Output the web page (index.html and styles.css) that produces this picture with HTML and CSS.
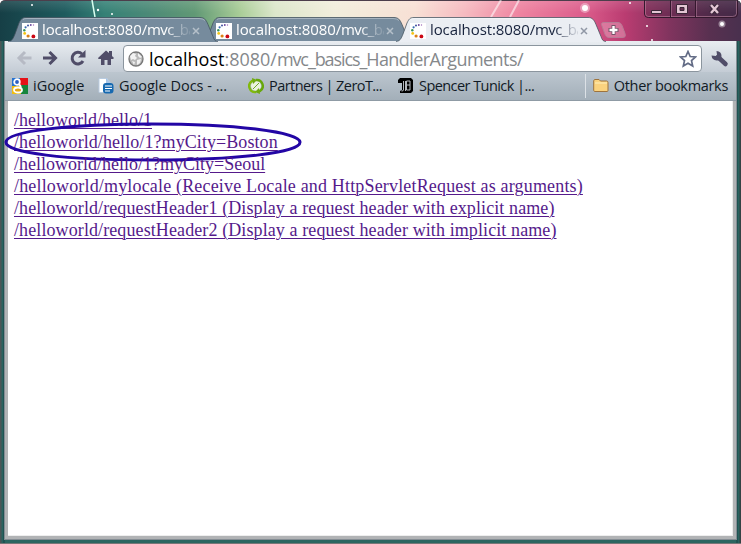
FILE: index.html
```html
<!DOCTYPE html>
<html lang="en">
<head>
<meta charset="utf-8">
<title>localhost:8080/mvc_basics_HandlerArguments/</title>
<link rel="stylesheet" href="styles.css">
</head>
<body>
<svg class="defs" width="0" height="0">
  <defs>
    <symbol id="fav" viewBox="0 0 16 16"><path fill="#fff" d="M0 0h16v16H0z"/><circle cx="11.5" cy="2" r=".7" fill="#a06dbb"/><circle cx="8.8" cy="2" r=".9" fill="#65429a"/><circle cx="6" cy="2.5" r="1" fill="#4050a0"/><circle cx="3.6" cy="4.3" r="1.1" fill="#386cae"/><circle cx="2.3" cy="7.2" r="1.2" fill="#39945c"/><circle cx="2.7" cy="10.4" r="1.4" fill="#f5c514"/><circle cx="6.1" cy="13" r="1.6" fill="#dc8116"/><circle cx="11.4" cy="13.4" r="1.9" fill="#cc0714"/></symbol>
    <symbol id="close" viewBox="0 0 8 8"><path d="m1 1 6 6m0-6L1 7" fill="none" stroke="currentColor" stroke-width="1.5"/></symbol>
    <symbol id="tabshape" viewBox="0 0 210 25"><path d="M0 25C4 24 5 22 7 17l4-11C13 2 14 .5 18 .5h174c4 0 6 2 8 7l5 12c1 3 2 5 5 5.500z" fill="currentColor"/><path d="M0 24.500C4 24 5 22 7 17l4-11C13 2 14 .5 18 .5h174c4 0 6 2 8 7l5 12c1 3 2 5 5 5" fill="none" stroke="#40505c" stroke-opacity=".75"/><path d="M15 2.500q1-1 4-1h172q4 0 6 2" fill="none" stroke="#fff" stroke-opacity=".35"/></symbol>
  </defs>
</svg>
<div class="window">
  <header class="titlebar">
    <svg class="sparkles" width="741" height="41" aria-hidden="true">
      <path d="m92 0 3 17" stroke="#d9fff0" stroke-width="1.5"/><path d="m501 0-10 17m28-17-9 17" stroke="#fff" stroke-width="2" opacity=".55"/>
      <g fill="#fff"><circle cx="32" cy="5" r="1"/><circle cx="98" cy="10" r="1.2"/><circle cx="112" cy="14" r="1"/><circle cx="585" cy="8" r="5" opacity=".35"/><circle cx="585" cy="8" r="3"/><circle cx="630" cy="3" r="1"/><circle cx="647" cy="26" r="1"/><circle cx="722" cy="24" r="3.5" opacity=".4"/><circle cx="722" cy="24" r="2"/><circle cx="652" cy="40" r="1"/></g>
    </svg>
    <nav class="tabs">
      <div class="tab first"><svg class="shape"><use href="#tabshape"/></svg><svg class="fav"><use href="#fav"/></svg><span class="label">localhost:8080/<i>mvc_ba</i></span><svg class="close"><use href="#close"/></svg></div>
      <div class="tab"><svg class="shape"><use href="#tabshape"/></svg><svg class="fav"><use href="#fav"/></svg><span class="label">localhost:8080/<i>mvc_ba</i></span><svg class="close"><use href="#close"/></svg></div>
      <div class="tab active"><svg class="shape"><use href="#tabshape"/></svg><svg class="fav"><use href="#fav"/></svg><span class="label">localhost:8080/<i>mvc_ba</i></span><svg class="close"><use href="#close"/></svg></div>
      <svg class="newtab" width="27" height="16" viewBox="0 0 27 16"><path d="M4 .5h14c2 0 3 1 4 3l3 8c1 3 0 4-3 4H9c-2 0-3-1-4-3L2 4C1 2 1 .5 4 .5z" fill="#e9a4bd" fill-opacity=".5" stroke="#b87c96"/><path d="M13.500 3v10M8.500 8h10" stroke="#765469" stroke-width="4"/><path d="M13.500 4v8M9.500 8h8" stroke="#fff" stroke-width="2.400"/></svg>
    </nav>
    <svg class="controls" width="94" height="19" viewBox="0 0 94 19"><path d="M.5 0v14q0 3.500 4 3.500h85q4 0 4-3.500V0" fill="#321832" fill-opacity=".25" stroke="#35182e"/><path d="M1.500 1v13q0 2.500 3 2.500h84q4 0 4-3V1" fill="none" stroke="#c990aa" stroke-opacity=".5"/><path d="M26.500 0v17M51.500 0v17" stroke="#35182e"/><path d="M27.500 1v16M52.500 1v16" stroke="#b882a0" stroke-opacity=".5"/><g stroke="#3b2637" fill="#e3c6d4"><path d="M7.500 10.500h10v3h-10z"/><path fill-rule="evenodd" d="M32.500 4.500h11v9h-11zm3.500 3v3h4v-3z"/></g><path d="m67 5 7 8m0-8-7 8" stroke="#382638" stroke-width="4.500"/><path d="m67 5 7 8m0-8-7 8" stroke="#e3c6d4" stroke-width="2.400"/></svg>
  </header>
  <div class="chrome">
    <div class="toolbar">
      <svg class="nav" width="110" height="26" viewBox="11 0 110 26">
        <path d="M34.500 13H22m6-6-6 6 6 6" fill="none" stroke="#b6bac4" stroke-width="3"/>
        <path d="M46 13h12.500m-6-6 6 6-6 6" fill="none" stroke="#504d68" stroke-width="3"/>
        <path d="M85 9a5.800 5.800 0 1 0 1 7" fill="none" stroke="#504d68" stroke-width="3"/><path d="M88.500 5v7.500H81z" fill="#504d68"/>
        <path d="m101 13 8-7.500 3 2.500V6h3v5l2 2-1 1h-2v6h-3.500v-5h-3v5H104v-6h-2.500z" fill="#504d68"/>
      </svg>
      <div class="omnibox">
        <svg width="16" height="16" viewBox="0 0 16 16"><circle cx="8" cy="8" r="7" fill="#b9b9b9" stroke="#777" stroke-width="1.300"/><path d="m2 5 3-3 3 1-1 2 2 2-2 2-2-1-2 1zM10 2l4 4-2 1-2-2zM9 9l4-1-1 4-3 2zM4 10l3 1-1 3z" fill="#f2f2f2"/></svg>
        <span class="url"><b>localhost</b>:8080/<span class="path">mvc_basics_</span><span class="file">HandlerArguments/</span></span>
        <svg class="star" width="18" height="18" viewBox="0 0 18 18"><path d="m9 1.500 2.200 5 5.300.5-4 3.600 1.200 5.400L9 13.200 4.300 16l1.200-5.400-4-3.600 5.300-.5z" fill="#fff" stroke="#626b85" stroke-width="1.700"/></svg>
      </div>
      <svg class="wrench" width="18" height="18" viewBox="0 0 18 18"><path d="m7 7 7.500 7" stroke="#504d68" stroke-width="4.500" stroke-linecap="round"/><path d="M.5 5.500 5 6l1-1-.5-4Q10.500 1.500 10.500 6q-.5 5-5 4.500T.5 5.500z" fill="#504d68"/></svg>
    </div>
    <div class="bookmarks">
      <span class="bm ig"><svg width="16" height="16" viewBox="0 0 16 16"><rect width="16" height="16" fill="#fff"/><path d="M8 0h8v7H8z" fill="#e51218"/><path d="M9 7h7v9H8z" fill="#16853c"/><path d="M0 8h9v8H0z" fill="#f1be10"/><path d="M0 0h8v8H0z" fill="#2873d0"/><circle cx="5" cy="4" r="2.800" fill="#295fc4" stroke="#fff" stroke-width="1.800"/><ellipse cx="6" cy="12" rx="4" ry="2.500" fill="#e3a61a" stroke="#fff" stroke-width="1.800"/><path d="m7 6 2 3" stroke="#fff" stroke-width="2"/></svg><span>iGoogle</span></span>
      <span class="bm docs"><svg width="16" height="16" viewBox="0 0 16 16"><path d="M1 .5h8l3 4v10H1z" fill="#fff" stroke="#b8cbe0"/><path d="M8 0v5h5z" fill="#a8c4e4"/><rect x="5" y="5" width="10.500" height="10.500" rx="3" fill="#1769b0"/><path d="M7 8h7M7 10.500h7M7 13h5" stroke="#fff"/></svg><span>Google Docs - ...</span></span>
      <span class="bm partners"><svg width="16" height="16" viewBox="0 0 16 16"><circle cx="8" cy="8" r="5" fill="#eaf3dd"/><path d="M8 14A6 6 0 0 1 4 3l2-1" fill="none" stroke="#81b90d" stroke-width="2.400"/><path d="M8 2a6 6 0 0 1 4 11l-2 1" fill="none" stroke="#67a80b" stroke-width="2.400"/><path d="m4 0 5 2-4 4zM12 16l-5-2 4-4z" fill="#70aa11"/><path d="m5 11 6-6" stroke="#72a82a"/></svg><span>Partners | ZeroT...</span></span>
      <span class="bm spencer"><svg width="16" height="16" viewBox="0 0 16 16"><path d="M2 0h11l2 2v11l-2 2H2v-2l2-1V5H0V2z" fill="#000"/><path d="M5.500 3v9q0 1-2 1M8.500 3H12v9H8.500zM9 7h3M7.500 3v10" fill="none" stroke="#c7cdd3" stroke-width=".9"/></svg><span>Spencer Tunick |...</span></span>
      <span class="bm other"><svg width="16" height="16" viewBox="0 0 16 16"><path d="M.7 12.500V2.700Q1 1.500 2 1.500h4L7.500 3h6q1.500 0 1.500 1.500v8q0 1-1 1H2q-1 0-1.300-1z" fill="#fbd37f" stroke="#9d733e"/><path d="M2 5h12" stroke="#fff0bd"/></svg><span>Other bookmarks</span></span>
    </div>
    <main class="page">
      <a>/helloworld/hello/1</a>
      <a class="circled">/helloworld/hello/1?myCity=Boston<svg class="ring" width="302" height="44" viewBox="0 0 302 44"><path d="M4 21C5 10 68 3 149 3c86 0 148 8 149 18 1 11-65 18-149 18C64 39 3 32 4 21z" fill="none" stroke="#2306a5" stroke-width="3"/></svg></a>
      <a>/helloworld/hello/1?myCity=Seoul</a>
      <a class="locale">/helloworld/mylocale (Receive Locale and HttpServletRequest as arguments)</a>
      <a class="header">/helloworld/requestHeader1 (Display a request header with explicit name)</a>
      <a class="header">/helloworld/requestHeader2 (Display a request header with implicit name)</a>
    </main>
  </div>
</div>
</body>
</html>
```
FILE: styles.css
```css
* { box-sizing: border-box; }
body { margin: 0; overflow: hidden; font-family: "Open Sans", "Noto Sans", sans-serif; }
svg { display: block; flex: none; }
.defs { position: absolute; }
.window { width: 741px; height: 544px; display: flex; flex-direction: column; background: linear-gradient(90deg, #4b5556 0 1px, #29625f 2px 3px, #174344 4px, transparent 5px 736px, #174344 737px, #29625f 738px 739px, #344244 740px), linear-gradient(#225255, #2c6661); border-top: 1px solid #4c3e4b; border-bottom: 1px solid #777; border-radius: 5px 5px 0 0; }
.titlebar { position: relative; height: 40px; flex: none; display: flex; align-items: flex-start; background: linear-gradient(180deg, rgba(255,255,255,.12), transparent 30%), linear-gradient(90deg, #163f46 0, #1e5b5e 65px, #358176 105px, #4c8a77 150px, #619975 195px, #a9cd97 240px, #dce7cb 275px, #f2eedc 335px, #f8e0d5 415px, #f6bac0 465px, #ee83a0 520px, #dc5c8b 585px, #ba3c71 625px, #80345e 670px, #583050 710px, #49304e 741px); border-radius: 5px 5px 0 0; }
.sparkles { position: absolute; left: 0; top: -1px; }
.tabs { display: flex; margin: 16px 0 0 8px; height: 24px; }
.tab { position: relative; display: flex; align-items: center; width: 209px; height: 24px; padding: 0 12px 0 14px; margin-left: -15px; color: #fff; flex: none; }
.tab.first { margin-left: 0; z-index: 1; }
.tab.active { z-index: 2; color: #17223c; }
.shape { position: absolute; left: 0; top: 0; width: 210px; height: 25px; color: #768b9d; }
.active .shape { color: #ebeef3; }
.fav { position: relative; width: 16px; height: 16px; margin-top: 4px; }
.label { position: relative; width: 148px; margin-left: 4px; white-space: nowrap; font-size: 15px; line-height: 22px; letter-spacing: -.1px; -webkit-mask-image: linear-gradient(90deg, #000 124px, rgba(0,0,0,.45) 136px, rgba(0,0,0,.1) 148px); mask-image: linear-gradient(90deg, #000 124px, rgba(0,0,0,.45) 136px, rgba(0,0,0,.1) 148px); }
.label i { font-style: normal; letter-spacing: -.65px; }
.close { position: relative; width: 8px; height: 8px; margin: 4px 0 0 2px; color: #b5c0ca; }
.active .close { color: #9097a5; }
.newtab { margin: 5px 0 0 -5px; }
.controls { position: absolute; right: 3px; top: -1px; }
.chrome { position: relative; margin: 0 4px 3px; flex: 1; display: flex; flex-direction: column; background: #b1b3b5; border: 1px solid #858d94; border-top: 0; }
.toolbar { display: flex; align-items: center; height: 31px; padding: 4px 7px 0 3px; background: linear-gradient(#e9edf1, #c4ccd5); }
.nav { margin-top: -2px; }
.omnibox { display: flex; align-items: center; width: 579px; height: 27px; margin-left: 5px; padding: 0 4px; background: #fff; border: 1px solid #8b959e; border-radius: 4px; }
.url { margin-left: 5px; font-size: 18px; line-height: 24px; color: #85888b; white-space: nowrap; }
.url b { font-weight: 400; color: #000; }
.path { letter-spacing: -1.1px; }
.file { letter-spacing: -.56px; }
.star { margin-left: auto; }
.wrench { margin-left: auto; }
.bookmarks { display: flex; align-items: center; height: 29px; padding: 0 8px 0 7px; background: linear-gradient(#bcc6cf, #a3afb9); border-bottom: 1px solid #8f9ba5; font-size: 14.5px; color: #111a25; }
.bm { display: flex; align-items: center; height: 24px; white-space: nowrap; }
.bm > span { margin-left: 5px; line-height: 22px; }
.ig { width: 86px; }
.docs { width: 150px; }
.partners { width: 150px; letter-spacing: -.56px; }
.spencer { letter-spacing: -.56px; }
.other { margin-left: auto; border-left: 1px solid #dce1e6; padding-left: 7px; letter-spacing: -.32px; }
.page { flex: 1; margin: 0 3px 3px; padding: 8px 6px; background: #fff; border: 1px solid #eee; border-left: 0; border-top: 0; display: flex; flex-direction: column; align-items: flex-start; font-family: "Liberation Serif", serif; font-size: 18px; line-height: 22px; color: #551a8b; }
.page a { position: relative; height: 22px; white-space: nowrap; text-decoration: underline; text-decoration-thickness: 1px; text-underline-offset: 2px; }
.page .circled { letter-spacing: .08px; }
.page .locale { letter-spacing: .17px; }
.page .header { letter-spacing: .1px; }
.ring { position: absolute; left: -12px; top: -10px; }
```
